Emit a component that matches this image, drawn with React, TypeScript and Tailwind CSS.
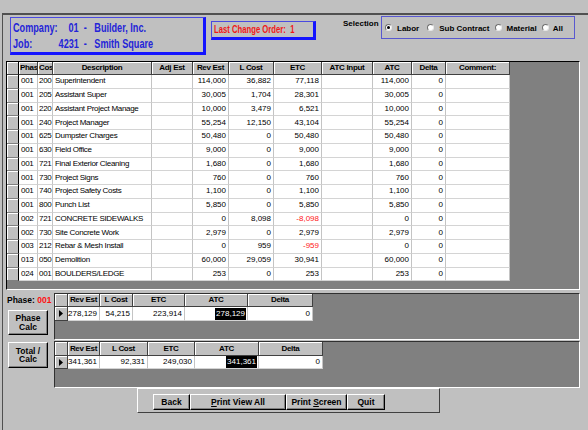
import type { ReactNode } from 'react';

type Row = {
  phase: string;
  cost: string;
  desc: string;
  rev: string;
  lcost: string;
  etc: string;
  atc: string;
  neg?: boolean;
};

const rows: Row[] = [
  { phase: '001', cost: '200', desc: 'Superintendent', rev: '114,000', lcost: '36,882', etc: '77,118', atc: '114,000' },
  { phase: '001', cost: '205', desc: 'Assistant Super', rev: '30,005', lcost: '1,704', etc: '28,301', atc: '30,005' },
  { phase: '001', cost: '220', desc: 'Assistant Project Manage', rev: '10,000', lcost: '3,479', etc: '6,521', atc: '10,000' },
  { phase: '001', cost: '240', desc: 'Project Manager', rev: '55,254', lcost: '12,150', etc: '43,104', atc: '55,254' },
  { phase: '001', cost: '625', desc: 'Dumpster Charges', rev: '50,480', lcost: '0', etc: '50,480', atc: '50,480' },
  { phase: '001', cost: '630', desc: 'Field Office', rev: '9,000', lcost: '0', etc: '9,000', atc: '9,000' },
  { phase: '001', cost: '721', desc: 'Final Exterior Cleaning', rev: '1,680', lcost: '0', etc: '1,680', atc: '1,680' },
  { phase: '001', cost: '730', desc: 'Project Signs', rev: '760', lcost: '0', etc: '760', atc: '760' },
  { phase: '001', cost: '740', desc: 'Project Safety Costs', rev: '1,100', lcost: '0', etc: '1,100', atc: '1,100' },
  { phase: '001', cost: '800', desc: 'Punch List', rev: '5,850', lcost: '0', etc: '5,850', atc: '5,850' },
  { phase: '002', cost: '721', desc: 'CONCRETE SIDEWALKS', rev: '0', lcost: '8,098', etc: '-8,098', atc: '0', neg: true },
  { phase: '002', cost: '730', desc: 'Site Concrete Work', rev: '2,979', lcost: '0', etc: '2,979', atc: '2,979' },
  { phase: '003', cost: '212', desc: 'Rebar & Mesh Install', rev: '0', lcost: '959', etc: '-959', atc: '0', neg: true },
  { phase: '013', cost: '050', desc: 'Demolition', rev: '60,000', lcost: '29,059', etc: '30,941', atc: '60,000' },
  { phase: '024', cost: '001', desc: 'BOULDERS/LEDGE', rev: '253', lcost: '0', etc: '253', atc: '253' },
];

const headCls =
  'h-full shrink-0 flex items-center justify-center overflow-hidden whitespace-nowrap bg-[#c0c0c0] border-r border-b border-[#404040] shadow-[inset_1px_1px_0_#ffffff] text-[8px] font-bold leading-none tracking-[-0.3px]';

const cellCls =
  'h-full shrink-0 flex items-center overflow-hidden whitespace-nowrap bg-white border-r border-b border-r-[#c4c4c4] border-b-[#d4d4d4] text-[8px] leading-none';

function Head({ w, children, left }: { w: string; children?: ReactNode; left?: boolean }) {
  return <div className={`${w} ${headCls} ${left ? 'justify-start pl-[1px]' : ''}`}>{children}</div>;
}

function Cell({ w, children, right, extra = 'px-[2px]' }: { w: string; children?: ReactNode; right?: boolean; extra?: string }) {
  return (
    <div className={`${w} ${cellCls} ${right ? 'justify-end' : 'justify-start tracking-[-0.3px]'} ${extra}`}>{children}</div>
  );
}

function Pointer() {
  return (
    <svg width="4" height="7" viewBox="0 0 4 7" className="block">
      <path d="M0 0 L4 3.5 L0 7 Z" fill="#000" />
    </svg>
  );
}

function Radio({ checked }: { checked?: boolean }) {
  return (
    <div className="w-[7px] h-[7px] shrink-0 rounded-full bg-white border border-t-[#707070] border-l-[#707070] border-r-[#e8e8e8] border-b-[#e8e8e8] flex items-center justify-center">
      {checked ? <div className="w-[3px] h-[3px] rounded-full bg-black" /> : null}
    </div>
  );
}

const btnCls =
  'bg-[#c0c0c0] border border-t-white border-l-white border-r-black border-b-black shadow-[inset_-1px_-1px_0_#808080] flex items-center justify-center text-[8.5px] font-bold leading-none';

function Selected({ value }: { value: string }) {
  return <span className="bg-black text-white px-[1px] py-[2px]">{value}</span>;
}

export default function App() {
  return (
    <div className="w-[588px] h-[430px] overflow-hidden bg-[#c0c0c0] text-black font-['Liberation_Sans',Arial,sans-serif]">
      <div className="h-[13px]" />
      <div className="ml-[2px] h-[417px] border-l border-t-2 border-[#505050]">
        {/* header strip */}
        <div className="h-[46px] flex items-start">
          <div className="ml-[7px] mt-[2px] w-[196px] h-[38px] border border-[#4a4ae0] border-r-[3px] border-b-[3px] border-r-[#1414ff] border-b-[#1414ff] pl-[2px] pt-[3px] text-[#2424d8] text-[12px] font-bold leading-[14px]">
            <div className="flex origin-left scale-x-[0.76] whitespace-nowrap">
              <span className="w-[73px]">Company:</span>
              <span className="w-[20px]">01</span>
              <span className="w-[14px]">-</span>
              <span>Builder, Inc.</span>
            </div>
            <div className="mt-[2px] flex origin-left scale-x-[0.76] whitespace-nowrap">
              <span className="w-[60px]">Job:</span>
              <span className="w-[33px]">4231</span>
              <span className="w-[14px]">-</span>
              <span>Smith Square</span>
            </div>
          </div>
          <div className="ml-[5px] mt-[6px] w-[105px] h-[19px] border border-[#4a4ae0] border-r-[3px] border-b-[3px] border-r-[#1414ff] border-b-[#1414ff] pl-[2px] flex items-center">
            <div className="origin-left scale-x-[0.77] whitespace-nowrap text-[10px] font-bold leading-none text-[#f01818]">
              Last Change Order:&nbsp; 1
            </div>
          </div>
          <div className="ml-[27px] mt-[4px] w-[38px] text-[8px] font-bold leading-[10px]">Selection</div>
          <div className="mt-[1px] w-[194px] h-[23px] border border-[#5858d0] flex items-center pl-[3px] text-[8px] font-bold leading-none">
            <Radio checked />
            <span className="ml-[5px] pt-[3px]">Labor</span>
            <div className="ml-[8px]"><Radio /></div>
            <span className="ml-[5px] pt-[3px]">Sub Contract</span>
            <div className="ml-[6px]"><Radio /></div>
            <span className="ml-[4px] pt-[3px]">Material</span>
            <div className="ml-[5px]"><Radio /></div>
            <span className="ml-[4px] pt-[3px]">All</span>
          </div>
        </div>

        {/* main grid */}
        <div className="ml-[3px] w-[574px] h-[229px] bg-[#808080] border border-t-black border-l-black border-r-white border-b-white">
          <div className="h-[13px] flex">
            <div className={`w-[12px] ${headCls} border-r-black`} />
            <Head w="w-[19px]" left>Phas</Head>
            <Head w="w-[15px]" left>Cos</Head>
            <Head w="w-[99px]">Description</Head>
            <Head w="w-[41px]">Adj Est</Head>
            <Head w="w-[36px]">Rev Est</Head>
            <Head w="w-[45px]">L Cost</Head>
            <Head w="w-[48px]">ETC</Head>
            <Head w="w-[51px]">ATC Input</Head>
            <Head w="w-[39px]">ATC</Head>
            <Head w="w-[34px]">Delta</Head>
            <Head w="w-[64px]">Comment:</Head>
          </div>
          {rows.map((r) => (
            <div key={r.phase + r.cost} className="h-[13.75px] flex">
              <div className="w-[12px] h-full shrink-0 bg-[#c0c0c0] border-r border-b border-r-black border-b-[#808080] shadow-[inset_1px_1px_0_#ffffff]" />
              <Cell w="w-[19px]" extra="pl-[2px] border-r-[#8a8a8a]">{r.phase}</Cell>
              <Cell w="w-[15px]" extra="pl-[1px]">{r.cost}</Cell>
              <Cell w="w-[99px]" extra="px-[2px] border-r-[#202020]">{r.desc}</Cell>
              <Cell w="w-[41px]" right />
              <Cell w="w-[36px]" right>{r.rev}</Cell>
              <Cell w="w-[45px]" right>{r.lcost}</Cell>
              <Cell w="w-[48px]" right extra={r.neg ? 'px-[2px] text-[#ff2020]' : 'px-[2px]'}>{r.etc}</Cell>
              <Cell w="w-[51px]" right />
              <Cell w="w-[39px]" right>{r.atc}</Cell>
              <Cell w="w-[34px]" right>0</Cell>
              <Cell w="w-[64px]" />
            </div>
          ))}
        </div>

        {/* totals */}
        <div className="mt-[3px] h-[95px] flex">
          <div className="w-[51px] shrink-0">
            <div className="mt-[2px] pl-[4px] h-[10px] text-[8.5px] font-bold leading-[10px] whitespace-nowrap">
              Phase: <span className="text-[#ff1010]">001</span>
            </div>
            <div className={`ml-[5px] mt-[5px] w-[40px] h-[25px] flex-col ${btnCls} leading-[11px]`}>
              <span>Phase</span>
              <span>Calc</span>
            </div>
            <div className={`ml-[5px] mt-[7px] w-[40px] h-[26px] flex-col ${btnCls} leading-[11px]`}>
              <span>Total /</span>
              <span>Calc</span>
            </div>
          </div>
          <div className="w-[526px] shrink-0">
            <div className="h-[47px] bg-[#808080] border border-t-[#303030] border-l-[#303030] border-r-white border-b-white">
              <div className="h-[13px] flex">
                <div className={`w-[13px] ${headCls}`} />
                <Head w="w-[32px]">Rev Est</Head>
                <Head w="w-[33px]">L Cost</Head>
                <Head w="w-[52px]">ETC</Head>
                <Head w="w-[63px]">ATC</Head>
                <Head w="w-[65px]">Delta</Head>
              </div>
              <div className="h-[14px] flex">
                <div className="w-[13px] h-full shrink-0 bg-[#c0c0c0] border-r border-b border-[#404040] shadow-[inset_1px_1px_0_#ffffff] flex items-center justify-center">
                  <Pointer />
                </div>
                <Cell w="w-[32px]" right>278,129</Cell>
                <Cell w="w-[33px]" right>54,215</Cell>
                <Cell w="w-[52px]" right>223,914</Cell>
                <Cell w="w-[63px]" right extra="pr-[1px]"><Selected value="278,129" /></Cell>
                <Cell w="w-[65px]" right>0</Cell>
              </div>
            </div>
            <div className="mt-[1px] h-[47px] bg-[#808080] border border-t-[#303030] border-l-[#303030] border-r-white border-b-white">
              <div className="h-[14px] flex">
                <div className={`w-[13px] ${headCls}`} />
                <Head w="w-[32px]">Rev Est</Head>
                <Head w="w-[48px]">L Cost</Head>
                <Head w="w-[47px]">ETC</Head>
                <Head w="w-[64px]">ATC</Head>
                <Head w="w-[64px]">Delta</Head>
              </div>
              <div className="h-[13px] flex">
                <div className="w-[13px] h-full shrink-0 bg-[#c0c0c0] border-r border-b border-[#404040] shadow-[inset_1px_1px_0_#ffffff] flex items-center justify-center">
                  <Pointer />
                </div>
                <Cell w="w-[32px]" right>341,361</Cell>
                <Cell w="w-[48px]" right>92,331</Cell>
                <Cell w="w-[47px]" right>249,030</Cell>
                <Cell w="w-[64px]" right extra="pr-[1px]"><Selected value="341,361" /></Cell>
                <Cell w="w-[64px]" right>0</Cell>
              </div>
            </div>
          </div>
        </div>

        {/* buttons */}
        <div className="ml-[134px] w-[303px] h-[25px] border border-t-white border-l-white border-r-[#404040] border-b-[#404040] pl-[15px] pt-[5px] flex items-start">
          <div className={`w-[37px] h-[16px] ${btnCls}`}>Back</div>
          <div className={`w-[96px] h-[16px] ${btnCls}`}>
            <span><span className="underline">P</span>rint View All</span>
          </div>
          <div className={`w-[61px] h-[16px] ${btnCls}`}>
            <span>Print <span className="underline">S</span>creen</span>
          </div>
          <div className={`w-[38px] h-[16px] ${btnCls}`}>Quit</div>
        </div>
      </div>
    </div>
  );
}
